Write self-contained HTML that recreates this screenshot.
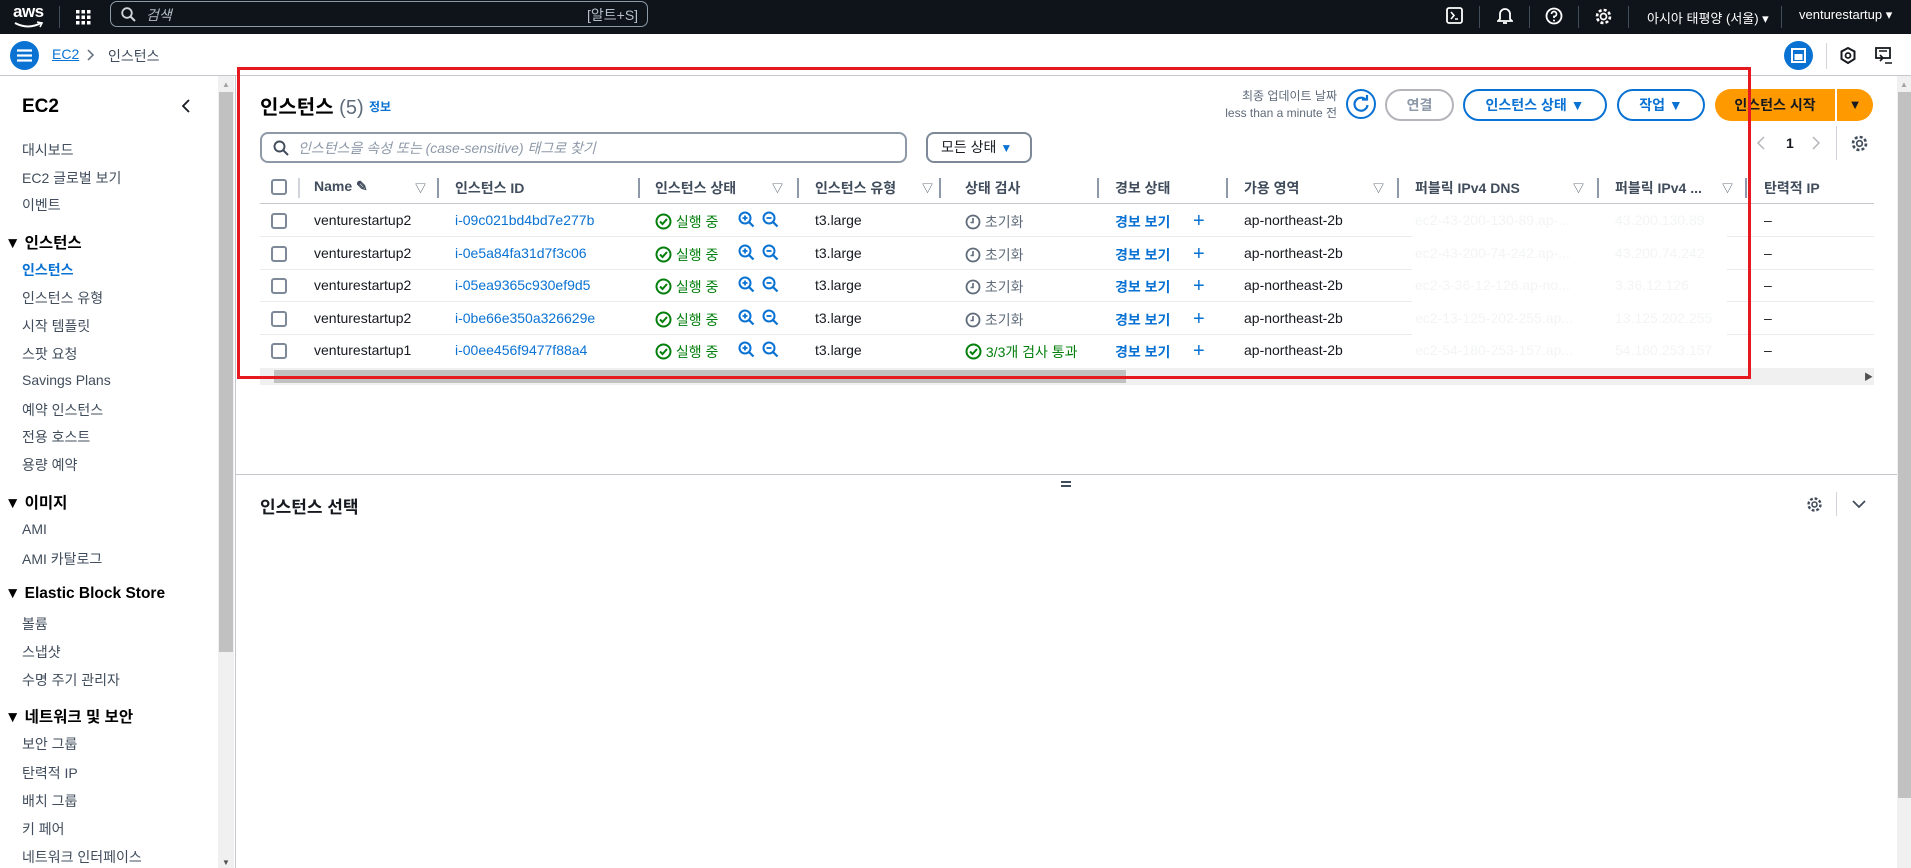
<!DOCTYPE html>
<html><head><meta charset="utf-8"><style>
*{box-sizing:border-box;margin:0;padding:0}
body{width:1911px;height:868px;overflow:hidden;background:#fff;font-family:"Liberation Sans","Noto Sans CJK KR",sans-serif;color:#16191f;font-size:14px;position:relative}
.a{position:absolute;white-space:nowrap}
.top{left:0;top:0;width:1911px;height:34px;background:#0f141a}
.w{color:#fff}
.sb{color:#414d5c;font-size:14px;left:22px}
.sh{font-weight:bold;font-size:15.5px;left:5px;color:#000}
.lnk{color:#0972d3}
.hd{font-weight:bold;color:#414d5c;font-size:14px}
.sep{width:2px;height:20px;background:#8d99a8}
.cb{width:16px;height:16px;border:2px solid #7d8998;border-radius:3px}
.rl{height:1px;background:#e9ebed}
.btn{border:2px solid #0972d3;border-radius:18px;color:#0972d3;font-weight:bold;text-align:center;line-height:28px;height:32px;font-size:14px}
.green{color:#037f0c}
.gray{color:#5f6b7a}
.faint{color:#f3f4f5}
</style></head><body>
<div class="a top"></div>
<div class="a w" style="left:13px;top:2px;font-size:17px;font-weight:bold;letter-spacing:-0.5px">aws</div>
<svg class="a" style="left:14px;top:21px" width="30" height="8"><path d="M1 2 Q14 9 27 2" stroke="#fff" stroke-width="2" fill="none"/><path d="M23 1 L28 2 L26 6" stroke="#fff" stroke-width="1.6" fill="none"/></svg>
<div class="a" style="left:59px;top:6px;width:1px;height:22px;background:#414d5c"></div>
<svg class="a" style="left:76px;top:10px" width="15" height="15" fill="#fff"><rect x="0" y="0" width="3.5" height="3.5"/><rect x="5.5" y="0" width="3.5" height="3.5"/><rect x="11" y="0" width="3.5" height="3.5"/><rect x="0" y="5.5" width="3.5" height="3.5"/><rect x="5.5" y="5.5" width="3.5" height="3.5"/><rect x="11" y="5.5" width="3.5" height="3.5"/><rect x="0" y="11" width="3.5" height="3.5"/><rect x="5.5" y="11" width="3.5" height="3.5"/><rect x="11" y="11" width="3.5" height="3.5"/></svg>
<div class="a" style="left:110px;top:1px;width:538px;height:26px;border:1px solid #8d99a8;border-radius:7px"></div>
<svg class="a" style="left:121px;top:7px" width="15" height="15"><circle cx="6" cy="6" r="4.8" stroke="#d1d5db" stroke-width="1.8" fill="none"/><path d="M9.5 9.5 L14 14" stroke="#d1d5db" stroke-width="2"/></svg>
<div class="a" style="left:146px;top:5px;color:#b6bec9;font-style:italic;font-size:14px">검색</div>
<div class="a" style="left:587px;top:5px;color:#b6bec9;font-size:14px">[알트+S]</div>
<svg class="a" style="left:1446px;top:7px" width="18" height="18"><rect x="1" y="1" width="15" height="15" rx="2" stroke="#fff" stroke-width="1.8" fill="none"/><path d="M5 5 L8 8.5 L5 12 M9 12 H12" stroke="#fff" stroke-width="1.6" fill="none"/></svg>
<div class="a" style="left:1479px;top:6px;width:1px;height:22px;background:#414d5c"></div>
<svg class="a" style="left:1497px;top:6px" width="16" height="19"><path d="M3 13 V8 A5 5 0 0 1 13 8 V13 L15 15 H1 Z" stroke="#fff" stroke-width="1.8" fill="none"/><path d="M6 17 H10" stroke="#fff" stroke-width="1.8"/></svg>
<div class="a" style="left:1529px;top:6px;width:1px;height:22px;background:#414d5c"></div>
<svg class="a" style="left:1545px;top:7px" width="18" height="18"><circle cx="9" cy="9" r="7.5" stroke="#fff" stroke-width="1.8" fill="none"/><path d="M6.5 7 A2.5 2.5 0 1 1 9 9.5 V11" stroke="#fff" stroke-width="1.7" fill="none"/><circle cx="9" cy="13.5" r="1" fill="#fff"/></svg>
<div class="a" style="left:1578px;top:6px;width:1px;height:22px;background:#414d5c"></div>
<svg class="a" style="left:1594px;top:7px" width="19" height="19"><circle cx="9.5" cy="9.5" r="3" stroke="#fff" stroke-width="1.7" fill="none"/><circle cx="9.5" cy="9.5" r="6.5" stroke="#fff" stroke-width="2.6" fill="none" stroke-dasharray="3 2.1"/></svg>
<div class="a" style="left:1628px;top:6px;width:1px;height:22px;background:#414d5c"></div>
<div class="a w" style="left:1647px;top:8px;font-size:13px">아시아 태평양 (서울) ▾</div>
<div class="a" style="left:1781px;top:6px;width:1px;height:22px;background:#414d5c"></div>
<div class="a w" style="left:1799px;top:7px;font-size:13px">venturestartup ▾</div>
<div class="a" style="left:10px;top:41px;width:29px;height:29px;border-radius:50%;background:#0972d3"></div>
<svg class="a" style="left:17px;top:49px" width="15" height="13"><path d="M0 1.5 H15 M0 6.5 H15 M0 11.5 H15" stroke="#fff" stroke-width="2.2"/></svg>
<div class="a lnk" style="left:52px;top:46px;font-size:14px;text-decoration:underline">EC2</div>
<svg class="a" style="left:87px;top:49px" width="8" height="12"><path d="M1 1 L6 6 L1 11" stroke="#5f6b7a" stroke-width="1.5" fill="none"/></svg>
<div class="a" style="left:108px;top:46px;font-size:14px;color:#414d5c">인스턴스</div>
<div class="a" style="left:1784px;top:41px;width:29px;height:29px;border-radius:50%;background:#0972d3"></div>
<svg class="a" style="left:1791px;top:48px" width="15" height="15"><rect x="1" y="1" width="13" height="13" stroke="#fff" stroke-width="2" fill="none"/><rect x="3.5" y="6" width="8" height="6" fill="#fff"/></svg>
<div class="a" style="left:1826px;top:43px;width:1px;height:26px;background:#d1d5db"></div>
<svg class="a" style="left:1840px;top:47px" width="16" height="17"><path d="M8 1 L14.5 4.5 V12 L8 16 L1.5 12 V4.5 Z" stroke="#16191f" stroke-width="2" fill="none"/><circle cx="8" cy="8.5" r="2.5" stroke="#16191f" stroke-width="1.8" fill="none"/></svg>
<svg class="a" style="left:1875px;top:47px" width="18" height="17"><rect x="1" y="1" width="14" height="10" stroke="#16191f" stroke-width="1.8" fill="none"/><path d="M4 4 H12 M5 8 L8 11 L5 14 M10 16 H17" stroke="#16191f" stroke-width="1.6" fill="none"/></svg>
<div class="a" style="left:0;top:75px;width:1911px;height:1px;background:#c6c6cd"></div>
<div class="a" style="left:22px;top:96px;font-size:19px;font-weight:bold;color:#000">EC2</div>
<svg class="a" style="left:182px;top:99px" width="8" height="14"><path d="M7 1 L1 7 L7 13" stroke="#16191f" stroke-width="1.8" fill="none"/></svg>
<div class="a sb" style="top:140px">대시보드</div>
<div class="a sb" style="top:168px">EC2 글로벌 보기</div>
<div class="a sb" style="top:195px">이벤트</div>
<div class="a sh" style="top:231px">▼ 인스턴스</div>
<div class="a sb" style="top:260px;color:#0972d3;font-weight:bold">인스턴스</div>
<div class="a sb" style="top:288px">인스턴스 유형</div>
<div class="a sb" style="top:316px">시작 템플릿</div>
<div class="a sb" style="top:344px">스팟 요청</div>
<div class="a sb" style="top:372px">Savings Plans</div>
<div class="a sb" style="top:400px">예약 인스턴스</div>
<div class="a sb" style="top:427px">전용 호스트</div>
<div class="a sb" style="top:455px">용량 예약</div>
<div class="a sh" style="top:491px">▼ 이미지</div>
<div class="a sb" style="top:521px">AMI</div>
<div class="a sb" style="top:549px">AMI 카탈로그</div>
<div class="a sh" style="top:585px">▼ Elastic Block Store</div>
<div class="a sb" style="top:614px">볼륨</div>
<div class="a sb" style="top:642px">스냅샷</div>
<div class="a sb" style="top:670px">수명 주기 관리자</div>
<div class="a sh" style="top:705px">▼ 네트워크 및 보안</div>
<div class="a sb" style="top:734px">보안 그룹</div>
<div class="a sb" style="top:763px">탄력적 IP</div>
<div class="a sb" style="top:791px">배치 그룹</div>
<div class="a sb" style="top:819px">키 페어</div>
<div class="a sb" style="top:847px">네트워크 인터페이스</div>
<div class="a" style="left:218px;top:76px;width:16px;height:792px;background:#f0f0f0"></div>
<div class="a" style="left:219px;top:92px;width:14px;height:560px;background:#c1c1c1"></div>
<div class="a" style="left:222px;top:80px;color:#a3a3a3;font-size:8px">▲</div>
<div class="a" style="left:222px;top:858px;color:#505050;font-size:8px">▼</div>
<div class="a" style="left:235px;top:76px;width:1px;height:792px;background:#c6c6cd"></div>
<div class="a" style="left:1897px;top:76px;width:14px;height:792px;background:#f0f0f0"></div>
<div class="a" style="left:1898px;top:92px;width:13px;height:706px;background:#c1c1c1"></div>
<div class="a" style="left:1900px;top:80px;color:#a3a3a3;font-size:8px">▲</div>
<div class="a" style="left:260px;top:91px;font-size:20px;font-weight:bold;color:#000">인스턴스 <span style="font-weight:normal;color:#5f6b7a">(5)</span></div>
<div class="a lnk" style="left:369px;top:98px;font-size:12px;font-weight:bold">정보</div>
<div class="a gray" style="left:1180px;top:88px;width:157px;text-align:right;font-size:12px;line-height:17px">최종 업데이트 날짜<br>less than a minute 전</div>
<div class="a" style="left:1346px;top:89px;width:30px;height:30px;border:2px solid #0972d3;border-radius:50%"></div>
<svg class="a" style="left:1352px;top:95px" width="18" height="18"><path d="M14 5 A6.5 6.5 0 1 0 15.5 10" stroke="#0972d3" stroke-width="2.2" fill="none"/><path d="M10 4.5 H15 V0" stroke="#0972d3" stroke-width="2.2" fill="none"/></svg>
<div class="a btn" style="left:1385px;top:89px;width:69px;border-color:#b4b4bb;color:#8d99a8">연결</div>
<div class="a btn" style="left:1463px;top:89px;width:144px">인스턴스 상태 ▼</div>
<div class="a btn" style="left:1617px;top:89px;width:88px">작업 ▼</div>
<div class="a" style="left:1715px;top:89px;width:120px;height:32px;background:#ff9900;border-radius:18px 0 0 18px;font-weight:bold;text-align:center;line-height:32px">인스턴스 시작</div>
<div class="a" style="left:1837px;top:89px;width:36px;height:32px;background:#ff9900;border-radius:0 18px 18px 0;text-align:center;line-height:32px;font-size:13px">▼</div>
<div class="a" style="left:260px;top:132px;width:647px;height:31px;border:2px solid #8d99a8;border-radius:8px"></div>
<svg class="a" style="left:273px;top:140px" width="16" height="16"><circle cx="6.5" cy="6.5" r="5" stroke="#414d5c" stroke-width="1.9" fill="none"/><path d="M10 10 L15 15" stroke="#414d5c" stroke-width="2"/></svg>
<div class="a" style="left:298px;top:138px;color:#8d99a8;font-style:italic;font-size:14px">인스턴스을 속성 또는 (case-sensitive) 태그로 찾기</div>
<div class="a" style="left:926px;top:132px;width:106px;height:31px;border:2px solid #7d8998;border-radius:8px;line-height:27px;padding-left:13px;font-size:14px">모든 상태 <span style="color:#0972d3;font-size:12px">▼</span></div>
<svg class="a" style="left:1757px;top:136px" width="8" height="14"><path d="M7 1 L1 7 L7 13" stroke="#b4b4bb" stroke-width="1.5" fill="none"/></svg>
<div class="a" style="left:1786px;top:135px;font-weight:bold;font-size:14px">1</div>
<svg class="a" style="left:1812px;top:136px" width="8" height="14"><path d="M1 1 L7 7 L1 13" stroke="#b4b4bb" stroke-width="1.5" fill="none"/></svg>
<div class="a" style="left:1836px;top:126px;width:1px;height:34px;background:#d1d5db"></div>
<svg class="a" style="left:1850px;top:134px" width="19" height="19"><circle cx="9.5" cy="9.5" r="2.8" stroke="#414d5c" stroke-width="1.7" fill="none"/><circle cx="9.5" cy="9.5" r="6.5" stroke="#414d5c" stroke-width="2.6" fill="none" stroke-dasharray="3 2.1"/></svg>
<div class="a cb" style="left:271px;top:179px"></div>
<div class="a sep" style="left:298px;top:178px;background:#d1d5db"></div>
<div class="a hd" style="left:314px;top:178px">Name ✎</div>
<div class="a" style="left:415px;top:180px;font-size:11px;color:#414d5c">▽</div>
<div class="a sep" style="left:437px;top:178px"></div>
<div class="a hd" style="left:455px;top:178px">인스턴스 ID</div>
<div class="a sep" style="left:638px;top:178px"></div>
<div class="a hd" style="left:655px;top:178px">인스턴스 상태</div>
<div class="a" style="left:772px;top:180px;font-size:11px;color:#414d5c">▽</div>
<div class="a sep" style="left:797px;top:178px"></div>
<div class="a hd" style="left:815px;top:178px">인스턴스 유형</div>
<div class="a" style="left:922px;top:180px;font-size:11px;color:#414d5c">▽</div>
<div class="a sep" style="left:939px;top:178px"></div>
<div class="a hd" style="left:965px;top:178px">상태 검사</div>
<div class="a sep" style="left:1097px;top:178px"></div>
<div class="a hd" style="left:1115px;top:178px">경보 상태</div>
<div class="a sep" style="left:1226px;top:178px"></div>
<div class="a hd" style="left:1244px;top:178px">가용 영역</div>
<div class="a" style="left:1373px;top:180px;font-size:11px;color:#414d5c">▽</div>
<div class="a sep" style="left:1397px;top:178px"></div>
<div class="a hd" style="left:1415px;top:178px">퍼블릭 IPv4 DNS</div>
<div class="a" style="left:1573px;top:180px;font-size:11px;color:#414d5c">▽</div>
<div class="a sep" style="left:1597px;top:178px"></div>
<div class="a hd" style="left:1615px;top:178px">퍼블릭 IPv4 ...</div>
<div class="a" style="left:1722px;top:180px;font-size:11px;color:#414d5c">▽</div>
<div class="a sep" style="left:1745px;top:178px"></div>
<div class="a hd" style="left:1764px;top:178px">탄력적 IP</div>
<div class="a" style="left:260px;top:203px;width:1614px;height:1px;background:#c6c6cd"></div>
<div id="rows"></div>
<script>
var d=[["venturestartup2","i-09c021bd4bd7e277b","ec2-43-200-130-89.ap-...","43.200.130.89",0],
["venturestartup2","i-0e5a84fa31d7f3c06","ec2-43-200-74-242.ap-...","43.200.74.242",0],
["venturestartup2","i-05ea9365c930ef9d5","ec2-3-36-12-126.ap-no...","3.36.12.126",0],
["venturestartup2","i-0be66e350a326629e","ec2-13-125-202-255.ap...","13.125.202.255",0],
["venturestartup1","i-00ee456f9477f88a4","ec2-54-180-253-157.ap...","54.180.253.157",1]];
var h="";
var chk='<svg width="17" height="17" style="vertical-align:-3px"><circle cx="8.5" cy="8.5" r="7" stroke="#037f0c" stroke-width="2" fill="none"/><path d="M5 8.5 L7.5 11 L12 6" stroke="#037f0c" stroke-width="2" fill="none"/></svg>';
var clk='<svg width="16" height="16" style="vertical-align:-3px"><circle cx="8" cy="8" r="6.5" stroke="#5f6b7a" stroke-width="1.8" fill="none"/><path d="M8 4 V8.5 H5.5" stroke="#5f6b7a" stroke-width="1.6" fill="none"/></svg>';
function mag(p){return '<svg width="17" height="17"><circle cx="7" cy="7" r="5.5" stroke="#0972d3" stroke-width="2" fill="none"/><path d="M11 11 L15.5 15.5" stroke="#0972d3" stroke-width="2.2"/><path d="M4.5 7 H9.5'+(p?' M7 4.5 V9.5':'')+'" stroke="#0972d3" stroke-width="1.8"/></svg>';}
for(var i=0;i<5;i++){var t=204+i*32.5;var y=t+8;
h+='<div class="a cb" style="left:271px;top:'+(y+1)+'px"></div>';
h+='<div class="a" style="left:314px;top:'+y+'px">'+d[i][0]+'</div>';
h+='<div class="a lnk" style="left:455px;top:'+y+'px">'+d[i][1]+'</div>';
h+='<div class="a green" style="left:655px;top:'+y+'px">'+chk+' 실행 중</div>';
h+='<div class="a" style="left:738px;top:'+(y-1)+'px">'+mag(1)+'</div><div class="a" style="left:762px;top:'+(y-1)+'px">'+mag(0)+'</div>';
h+='<div class="a" style="left:815px;top:'+y+'px">t3.large</div>';
h+= d[i][4]?'<div class="a green" style="left:965px;top:'+y+'px">'+chk+' 3/3개 검사 통과</div>':'<div class="a gray" style="left:965px;top:'+y+'px">'+clk+' 초기화</div>';
h+='<div class="a lnk" style="left:1115px;top:'+y+'px;font-weight:bold">경보 보기</div>';
h+='<div class="a lnk" style="left:1193px;top:'+(y-1)+'px;font-size:20px;line-height:20px">+</div>';
h+='<div class="a" style="left:1244px;top:'+y+'px">ap-northeast-2b</div>';
h+='<div class="a faint" style="left:1415px;top:'+y+'px">'+d[i][2]+'</div>';
h+='<div class="a faint" style="left:1615px;top:'+y+'px">'+d[i][3]+'</div>';
h+='<div class="a" style="left:1764px;top:'+y+'px">–</div>';
if(i<4){h+='<div class="a rl" style="left:260px;top:'+(t+32)+'px;width:1152px"></div><div class="a rl" style="left:1727px;top:'+(t+32)+'px;width:147px"></div>';}
}
document.getElementById('rows').innerHTML=h;
</script>
<div class="a" style="left:260px;top:368px;width:1614px;height:17px;background:#f0f0f0"></div>
<div class="a" style="left:274px;top:370px;width:852px;height:13px;background:#c1c1c1"></div>
<div class="a" style="left:1864px;top:370px;color:#505050;font-size:9px">▶</div>
<div class="a" style="left:237px;top:67px;width:1514px;height:312px;border:3px solid #e5191f"></div>
<div class="a" style="left:236px;top:474px;width:1661px;height:1px;background:#c6c6cd"></div>
<div class="a" style="left:1061px;top:481px;width:10px;height:2px;background:#414d5c"></div>
<div class="a" style="left:1061px;top:485px;width:10px;height:2px;background:#414d5c"></div>
<div class="a" style="left:260px;top:493px;font-size:17px;font-weight:bold">인스턴스 선택</div>
<svg class="a" style="left:1806px;top:496px" width="17" height="17"><circle cx="8.5" cy="8.5" r="2.5" stroke="#414d5c" stroke-width="1.6" fill="none"/><circle cx="8.5" cy="8.5" r="6" stroke="#414d5c" stroke-width="2.4" fill="none" stroke-dasharray="2.8 1.9"/></svg>
<div class="a" style="left:1836px;top:492px;width:1px;height:24px;background:#d1d5db"></div>
<svg class="a" style="left:1852px;top:500px" width="14" height="9"><path d="M1 1 L7 7 L13 1" stroke="#414d5c" stroke-width="1.8" fill="none"/></svg>
</body></html>
